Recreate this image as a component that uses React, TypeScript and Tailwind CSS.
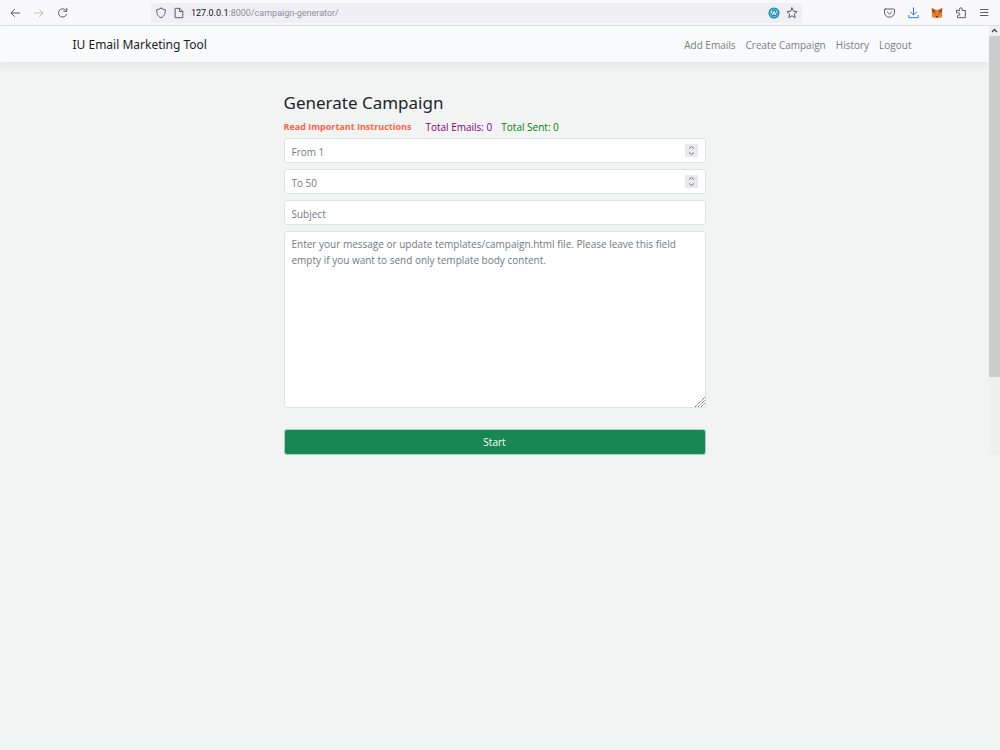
import type { ReactNode } from 'react';

const navLinks = ['Add Emails', 'Create Campaign', 'History', 'Logout'];

const fieldClass =
  'block w-full rounded-[3px] border border-[#dfe3e6] bg-white px-[7px] text-[10px] text-[#212529] placeholder:text-[#727a81] placeholder:opacity-100 focus:outline-none';

export default function App() {
  return (
    <div className="min-h-screen bg-[#f2f4f4] font-['Open_Sans','Noto_Sans',sans-serif]">
      <BrowserBar />
      <div className="flex items-start">
        <div className="min-w-0 flex-1">
          <SiteHeader />
          <CampaignForm />
        </div>
        <Scrollbar />
      </div>
    </div>
  );
}

function BrowserBar() {
  return (
    <header className="flex h-[26px] items-center border-b border-[#e0e0e4] bg-[#f9f9fb] pr-[9px] pl-[9px] text-[#5b5b66]">
      <div className="flex w-[142px] shrink-0 gap-[12px]">
        <ToolButton label="Back">
          <path d="M10.500 6H2M5.500 2.500 2 6l3.500 3.500" />
        </ToolButton>
        <ToolButton label="Forward" className="text-[#bfbfc5]">
          <path d="M1.500 6H10M6.500 2.500 10 6 6.500 9.500" />
        </ToolButton>
        <ToolButton label="Reload">
          <path d="M9.300 3.800A4.200 4.200 0 1 0 9.700 7.200M9.800 1.200v3.100H6.700" />
        </ToolButton>
      </div>
      <div className="flex h-5 min-w-0 flex-1 items-center rounded-[2px] bg-[#f0f0f4] px-1">
        <ToolButton label="Site protection">
          <path d="M6 1.200c1.300.9 2.700 1.300 4.300 1.400 0 4-.8 6.600-4.300 8.300C2.500 9.200 1.700 6.600 1.700 2.600 3.300 2.500 4.700 2.100 6 1.200Z" />
        </ToolButton>
        <span className="w-[6px]" />
        <ToolButton label="Site information">
          <path d="M2.500 1.300h4.300l3 3v6.400H2.500zM6.500 1.500v3.100h3" />
        </ToolButton>
        <p className="ml-[6px] flex-1 truncate font-[Roboto,sans-serif] text-[9px] leading-5 text-[#8f8f98]">
          <span className="text-[#15141a]">127.0.0.1</span>:8000/campaign-generator/
        </p>
        <button type="button" aria-label="WordPress" className="mr-[6px] shrink-0">
          <svg width="12" height="12" viewBox="0 0 12 12" fill="none">
            <circle cx="6" cy="6" r="5.500" fill="#0b7fb8" />
            <circle cx="6" cy="6" r="4" stroke="#d5ecf6" strokeWidth=".6" />
            <path d="M3 4.300h1.500M5.300 4.300h1.600M3.400 4.400l1.300 3.700L6 4.900l1.300 3.200 1.100-3.500-.7-.8" stroke="#fff" strokeWidth=".9" />
          </svg>
        </button>
        <ToolButton label="Bookmark">
          <path d="m6 .9 1.500 3.300 3.600.4-2.700 2.400.8 3.600L6 8.800l-3.200 1.800.8-3.600L.9 4.600l3.600-.4z" />
        </ToolButton>
      </div>
      <div className="ml-[81px] flex shrink-0 items-center gap-[12px]">
        <ToolButton label="Save to Pocket">
          <path d="M2.200 2h8.600c.4 0 .7.300.7.700v2.500a5 5 0 0 1-10 0V2.700c0-.4.3-.7.7-.7zM4.200 4.900l2.300 2.200 2.300-2.200" />
        </ToolButton>
        <ToolButton label="Downloads" className="text-[#2a7de8]">
          <path d="M6.500.8v7M3.500 5l3 3 3-3M1.800 8.500v2.200h9.400V8.500" />
        </ToolButton>
        <button type="button" aria-label="MetaMask" className="shrink-0">
          <svg width="12" height="12" viewBox="0 0 12 12">
            <path d="M.7 1 4.600 2.800h2.800L11.300 1l-.5 5 .5 2.700-.9 2.100-2-.4-1.200.6H4.800l-1.200-.6-2 .4L.7 8.700 1.200 6z" fill="#e8812b" />
            <path d="m.7 1 4 2.800-1.200 1.600L1.200 6zM11.300 1l-4 2.800 1.200 1.600 2.300.6z" fill="#a4501d" />
            <path d="m3.300 6.300 1.600.4-.3.800zM8.700 6.300l-1.600.4.3.8zM5 9.300h2v1H5z" fill="#33271f" />
          </svg>
        </button>
        <ToolButton label="Extensions">
          <path d="M4.500 3.500V2.200a1.400 1.400 0 0 1 2.800 0v1.300h3v7.200H2.500V8.400h1a1.300 1.300 0 0 0 0-2.600h-2V3.500z" />
        </ToolButton>
        <ToolButton label="Menu">
          <path d="M1.500 2.500h7.500M1.500 5.500h7.500M1.500 8.500h7.500" />
        </ToolButton>
      </div>
    </header>
  );
}

function ToolButton({
  label,
  className = '',
  children,
}: {
  label: string;
  className?: string;
  children: ReactNode;
}) {
  return (
    <button type="button" aria-label={label} className={`shrink-0 ${className}`}>
      <svg
        width="12"
        height="12"
        viewBox="0 0 12 12"
        fill="none"
        stroke="currentColor"
        strokeLinecap="round"
        strokeLinejoin="round"
      >
        {children}
      </svg>
    </button>
  );
}

function SiteHeader() {
  return (
    <div className="bg-[#f8fafc] shadow-[0_4px_8px_rgba(0,0,0,0.06)]">
      <nav className="mx-auto flex h-9 max-w-[844px] items-center justify-between pt-[2px] pr-[5px]">
        <a href="#" className="font-['Noto_Sans',sans-serif] text-[12px] text-[#1b1e21]">
          IU Email Marketing Tool
        </a>
        <div className="flex gap-[10px]">
          {navLinks.map((link) => (
            <a key={link} href="#" className="text-[10px] text-[#7b7d7e]">
              {link}
            </a>
          ))}
        </div>
      </nav>
    </div>
  );
}

function CampaignForm() {
  return (
    <main className="mx-auto w-full max-w-[422px] pt-[30px]">
      <h1 className="font-['Noto_Sans',sans-serif] text-[17px] leading-[22px] text-[#212529]">
        Generate Campaign
      </h1>
      <div className="mt-[5px] flex text-[10px] leading-[16px]">
        <a href="#" className="mr-[14px] text-[9px] font-bold text-[#ff6347]">
          Read Important Instructions
        </a>
        <span className="mr-[9px] text-[#800080]">Total Emails: 0</span>
        <span className="text-[#008000]">Total Sent: 0</span>
      </div>
      <form className="mt-[3px]" onSubmit={(e) => e.preventDefault()}>
        <div className="flex flex-col gap-[6px]">
          <NumberField label="From" placeholder="From 1" />
          <NumberField label="To" placeholder="To 50" />
          <input type="text" aria-label="Subject" placeholder="Subject" className={`${fieldClass} h-[25px] pt-[2px]`} />
          <div className="relative">
            <textarea
              aria-label="Message"
              placeholder="Enter your message or update templates/campaign.html file. Please leave this field empty if you want to send only template body content."
              className={`${fieldClass} h-[177px] resize-none py-[4px] leading-[16px]`}
            />
            <svg
              className="pointer-events-none absolute right-px bottom-px"
              width="10"
              height="10"
              viewBox="0 0 10 10"
              stroke="#66666b"
              strokeDasharray="1.400 .5"
            >
              <path d="M0 10 10 0M3 10l7-7M6 10l4-4" />
            </svg>
          </div>
        </div>
        <button
          type="submit"
          className="mt-[21px] block h-[26px] w-full rounded-[3px] border border-[#a9cfbd] bg-[#198754] text-[10px] text-white"
        >
          Start
        </button>
      </form>
    </main>
  );
}

function NumberField({ label, placeholder }: { label: string; placeholder: string }) {
  return (
    <div className="relative">
      <input
        type="number"
        aria-label={label}
        placeholder={placeholder}
        className={`${fieldClass} h-[25px] [appearance:textfield] pt-[2px]`}
      />
      <svg
        className="pointer-events-none absolute top-[6px] right-2"
        width="13"
        height="13"
        viewBox="0 0 13 13"
        fill="none"
      >
        <path d="M0 0h13v13H0z" fill="#e9e9ed" />
        <path d="m4 4.500 2.500-2 2.500 2M4 8.500l2.500 2 2.500-2" stroke="#77777f" />
      </svg>
    </div>
  );
}

function Scrollbar() {
  return (
    <div className="h-[429px] w-[11px] shrink-0 bg-[#f0f0f0]">
      <svg width="11" height="10" viewBox="0 0 11 10" fill="none">
        <path d="m3 6 2.500-2.500L8 6" stroke="#505050" strokeWidth="1.500" />
      </svg>
      <div className="h-[341px] bg-[#cdcdcd]" />
    </div>
  );
}
